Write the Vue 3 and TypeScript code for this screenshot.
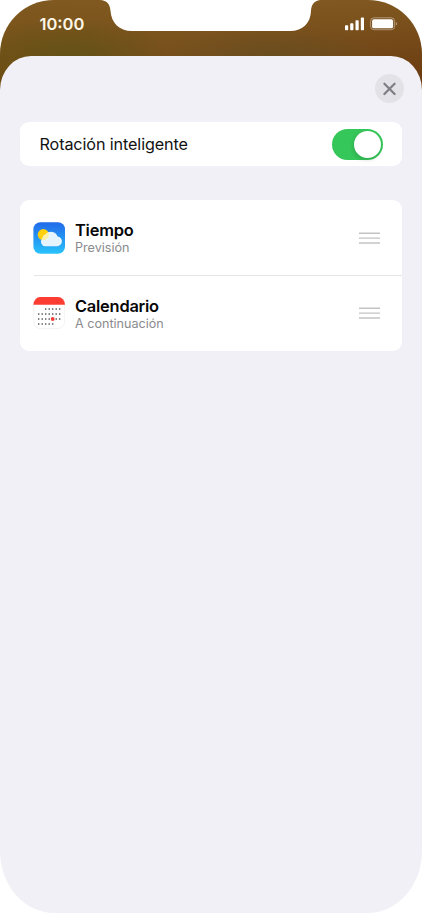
<script setup lang="ts">
import { ref } from 'vue'

interface Widget {
  id: 'weather' | 'calendar'
  title: string
  subtitle: string
}

const smartRotate = ref(true)

const widgets: Widget[] = [
  { id: 'weather', title: 'Tiempo', subtitle: 'Previsión' },
  { id: 'calendar', title: 'Calendario', subtitle: 'A continuación' },
]

// First and last filled column of each calendar row
const weeks = [
  { first: 2, last: 6 },
  { first: 0, last: 6 },
  { first: 0, last: 6 },
  { first: 0, last: 4 },
]
const dots = weeks.flatMap(({ first, last }, row) =>
  Array.from({ length: last - first + 1 }, (_, i) => ({
    x: 5.7 + (first + i) * 3.5,
    y: 12 + row * 5,
  })),
)
</script>

<template>
  <div class="phone">
    <svg class="notch" viewBox="0 0 216 31" width="216" height="31" aria-hidden="true">
      <path d="M-3 0C4 .4 7 4 7.500 11C8.500 23 16 31 29 31H187C200 31 207.500 23 208 11C208.300 5 211 .6 217 0Z" fill="#fff" />
    </svg>

    <header class="status">
      <span class="time">10:00</span>
      <svg class="indicators" viewBox="0 0 54 16" width="54" height="16" aria-hidden="true">
        <g fill="#fff">
          <rect x="2" y="9.300" width="3.200" height="4.900" rx="0.800" />
          <rect x="7.200" y="7.200" width="3.200" height="7" rx="0.800" />
          <rect x="12.500" y="4.300" width="3.200" height="9.900" rx="0.800" />
          <rect x="17.800" y="1.600" width="3.200" height="12.600" rx="0.800" />
        </g>
        <rect x="27.600" y="1.800" width="24" height="11.900" rx="3.400" fill="none" stroke="#fff" stroke-opacity=".4" />
        <rect x="29.100" y="3.300" width="21" height="9" rx="1.900" fill="#fff" />
        <path d="M52.900 5.900c1.300.5 1.300 3.300 0 3.800z" fill="#fff" fill-opacity=".5" />
      </svg>
    </header>

    <main class="sheet">
      <div class="toolbar">
        <button class="close" type="button" aria-label="Cerrar">
          <svg viewBox="0 0 29 29" width="29" height="29">
            <path d="M9.400 9.800l10.200 10.200M19.600 9.800L9.400 20" stroke="#807f85" stroke-width="2.300" stroke-linecap="round" />
          </svg>
        </button>
      </div>

      <section class="card setting">
        <span class="label">Rotación inteligente</span>
        <button
          class="toggle"
          :class="{ on: smartRotate }"
          type="button"
          role="switch"
          aria-label="Rotación inteligente"
          :aria-checked="smartRotate"
          @click="smartRotate = !smartRotate"
        >
          <span class="knob"></span>
        </button>
      </section>

      <ul class="card list">
        <li v-for="item in widgets" :key="item.id" class="row">
          <svg v-if="item.id === 'weather'" class="app" viewBox="0 0 32 32" width="32" height="32">
            <defs>
              <linearGradient id="sky" x1="0" y1="0" x2="0" y2="1">
                <stop offset="0" stop-color="#2169e9" />
                <stop offset=".5" stop-color="#2595f2" />
                <stop offset="1" stop-color="#29c3fb" />
              </linearGradient>
              <clipPath id="cloud">
                <path d="M12.400 24.200a4.900 4.900 0 0 1-1.700-9.400a5 5 0 0 1 5.100-2.400a6.300 6.300 0 0 1 8.400 2.300a4.800 4.800 0 0 1-.9 9.500z" />
              </clipPath>
            </defs>
            <rect x=".4" y=".2" width="31.600" height="31.600" rx="7" fill="url(#sky)" />
            <circle cx="10.300" cy="12.600" r="5.600" fill="#ffd00b" />
            <path d="M12.400 24.200a4.500 4.500 0 0 1-3.100-7.700a5.300 5.300 0 0 1 3.500-4.300a6.900 6.900 0 0 1 11.800 2.400a4.800 4.800 0 0 1-.9 9.600z" fill="#e6f4ff" />
            <path d="M9.300 16.500a5.300 5.300 0 0 1 3.500-4.300q1-1.300 2.600-1.900a5.600 5.600 0 0 1-5 7.900q-1.100 0-2-.4q.3-.7.900-1.300z" fill="#fff0a8" />
          </svg>
          <svg v-else class="app" viewBox="0 0 32 32" width="32" height="32">
            <rect x=".7" y=".5" width="30.900" height="31" rx="6.700" fill="#fff" stroke="#f0f0f1" stroke-width=".8" />
            <path d="M.4 7.700A7 7.600 0 0 1 7.200.1H25A7 7.600 0 0 1 31.900 7.700Z" fill="#fd3d32" />
            <rect v-for="(dot, i) in dots" :key="i" :x="dot.x - 0.75" :y="dot.y - 0.75" width="1.500" height="1.500" rx=".4" fill="#47474a" />
            <circle cx="19.700" cy="22" r="1.900" fill="#f63d35" />
          </svg>
          <div class="content">
            <div class="names">
              <span class="title">{{ item.title }}</span>
              <span class="subtitle">{{ item.subtitle }}</span>
            </div>
            <svg class="grip" viewBox="0 0 21 12" width="21" height="12" aria-hidden="true">
              <path d="M0 1.200H21M0 6.100H21M0 11H21" stroke="#c3c3c5" stroke-width="1.400" />
            </svg>
          </div>
        </li>
      </ul>
    </main>
  </div>
</template>

<style>
body {
  margin: 0;
  background: #fff;
}
</style>

<style scoped>
.phone {
  position: relative;
  display: flex;
  flex-direction: column;
  width: 422px;
  height: 913px;
  overflow: hidden;
  border-radius: 54px / 54px 54px 62px 62px;
  background:
    radial-gradient(ellipse 95px 38px at 70px 56px, rgba(98, 82, 22, 0.9), transparent),
    radial-gradient(ellipse 110px 30px at 275px 56px, rgba(103, 78, 32, 0.8), transparent),
    linear-gradient(180deg, rgba(130, 90, 33, 0.9), rgba(130, 90, 33, 0) 75px),
    linear-gradient(90deg, #6f4e14, #744c1b 50%, #6c3d12);
  background-size: 100% 110px;
  background-repeat: no-repeat;
  font-family: Inter, "Liberation Sans", sans-serif;
}
.notch {
  position: absolute;
  top: 0;
  left: 103px;
  overflow: visible;
}
.status {
  display: flex;
  justify-content: space-between;
  box-sizing: border-box;
  height: 56px;
  padding: 14px 25px 0 39.500px;
}
.time {
  height: 20px;
  color: #fff7e6;
  font-size: 16.500px;
  font-weight: 600;
  line-height: 20px;
}
.indicators {
  margin-top: 2px;
}
.sheet {
  flex: 1;
  padding: 0 20px;
  border-radius: 31px 31px 0 0 / 34px 34px 0 0;
  background: #f1f0f6;
}
.toolbar {
  display: flex;
  justify-content: flex-end;
  height: 66px;
  margin-right: -2px;
}
.close {
  width: 29px;
  height: 29px;
  margin-top: 18px;
  padding: 0;
  border: 0;
  border-radius: 50%;
  background: #e3e2e7;
}
.close svg {
  display: block;
}
.card {
  margin: 0;
  border-radius: 9px;
  background: #fff;
}
.setting {
  display: flex;
  align-items: center;
  justify-content: space-between;
  height: 43.500px;
  padding: 0 19.500px;
}
.label {
  color: #111;
  font-size: 16.200px;
  line-height: 22px;
  letter-spacing: -0.120px;
}
.toggle {
  box-sizing: border-box;
  width: 51px;
  height: 31px;
  margin-top: 1px;
  padding: 2px;
  border: 0;
  border-radius: 16px;
  background: #e9e9eb;
}
.toggle.on {
  display: flex;
  justify-content: flex-end;
  background: #35c759;
}
.knob {
  display: block;
  width: 27px;
  height: 27px;
  border-radius: 50%;
  background: #fff;
  box-shadow: -1px 2px 4px rgba(0, 0, 0, 0.14);
}
.list {
  margin-top: 34.500px;
  padding: 0;
  list-style: none;
}
.row {
  display: flex;
  align-items: center;
  height: 75.250px;
  padding-left: 13px;
}
.row + .row {
  background: linear-gradient(#e5e5e7, #e5e5e7) 13.500px 0 / 100% 1px no-repeat;
}
.app {
  flex: none;
}
.content {
  display: flex;
  flex: 1;
  align-items: center;
  justify-content: space-between;
  height: 100%;
  padding: 0 22px 0 10px;
}
.names {
  display: flex;
  flex-direction: column;
  padding-top: 2.500px;
}
.title {
  color: #080808;
  font-size: 16.400px;
  font-weight: 600;
  line-height: 19px;
  letter-spacing: -0.220px;
}
.subtitle {
  color: #8b8b8e;
  font-size: 12.600px;
  line-height: 16px;
}
</style>
